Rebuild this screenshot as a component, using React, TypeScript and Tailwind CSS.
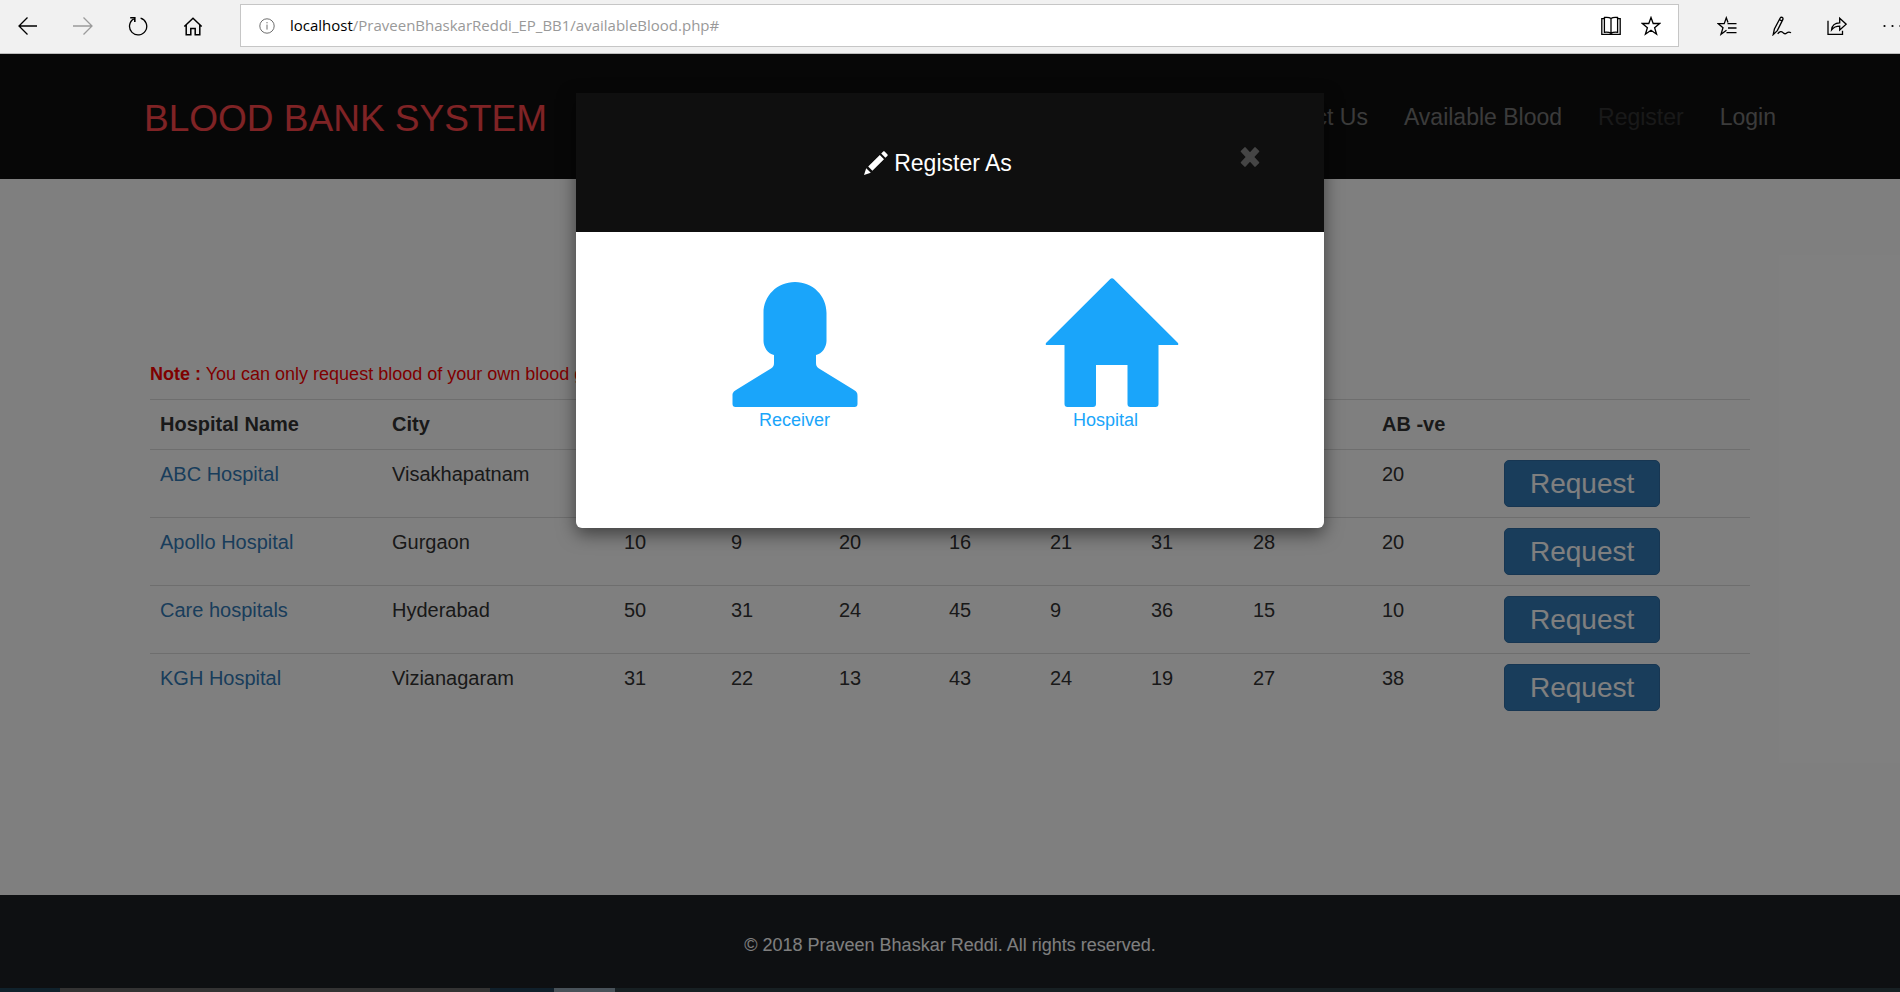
import { ReactNode } from "react";

type Hospital = { name: string; city: string; stock: (number | null)[] };

const groups = ["", "", "", "", "", "", "", "AB -ve"];

const hospitals: Hospital[] = [
  { name: "ABC Hospital", city: "Visakhapatnam", stock: [null, null, null, null, null, null, null, 20] },
  { name: "Apollo Hospital", city: "Gurgaon", stock: [10, 9, 20, 16, 21, 31, 28, 20] },
  { name: "Care hospitals", city: "Hyderabad", stock: [50, 31, 24, 45, 9, 36, 15, 10] },
  { name: "KGH Hospital", city: "Vizianagaram", stock: [31, 22, 13, 43, 24, 19, 27, 38] },
];

const columns = [
  "w-[232px]", "w-[232px]", "w-[107px]", "w-[108px]", "w-[110px]", "w-[101px]",
  "w-[101px]", "w-[102px]", "w-[129px]", "w-[122px]", "w-auto",
];

function Line({ children }: { children: ReactNode }) {
  return (
    <svg viewBox="0 0 20 20" fill="none" stroke="currentColor" strokeWidth="1.3" className="size-5" aria-hidden="true">
      {children}
    </svg>
  );
}

function BrowserBar() {
  return (
    <div className="flex h-[54px] shrink-0 items-center overflow-hidden border-b border-[#bdbdbd] bg-[#f1f1f1] pb-0.5 pl-[18px] text-black">
      <div className="flex w-[222px] shrink-0 items-center gap-[35px]">
        <button aria-label="Back">
          <Line>
            <path d="M19 10H1M9.500 1.500 1 10l8.500 8.500" />
          </Line>
        </button>
        <button aria-label="Forward" className="text-[#9b9b9b]">
          <Line>
            <path d="M0 10h19M10.500 1.500 19 10l-8.500 8.500" />
          </Line>
        </button>
        <button aria-label="Refresh">
          <Line>
            <path d="M12.600 2.100A8.600 8.600 0 1 1 5.800 2.900" />
            <path d="M2.200 1.700h4.600v4.300" strokeWidth="1.600" />
          </Line>
        </button>
        <button aria-label="Home">
          <Line>
            <path d="M1.300 10.500 10 2.200l8.700 8.300M3.200 9v9.800h4.600v-6.400h4.400v6.400h4.600V9" strokeWidth="1.500" />
          </Line>
        </button>
      </div>
      <div className="flex h-[43px] min-w-0 grow items-center border border-[#c6c6c6] bg-white pl-[18px] pr-[17px]">
        <svg viewBox="0 0 16 16" fill="none" stroke="#6e6e6e" className="size-4 shrink-0" aria-hidden="true">
          <circle cx="8" cy="8" r="7.200" />
          <path d="M8 6.600v5M8 4v1.300" />
        </svg>
        <p className="grow truncate pl-[15px] font-['Open_Sans',sans-serif] text-[15px] text-[#999]">
          <span className="text-black">localhost</span>/PraveenBhaskarReddi_EP_BB1/availableBlood.php#
        </p>
        <div className="flex gap-5">
          <button aria-label="Reading view">
            <Line>
              <path d="M10 2.600C8.500 1.300 5.600 1.200 3.400 1.500v14.800c2.500-.2 5.100-.1 6.600 1.200 1.500-1.300 4.100-1.400 6.600-1.200V1.500c-2.200-.3-5.100-.2-6.600 1.100zM10 2.600v15.600" />
              <path d="M3.400 2.700H.8v15.600h18.400V2.700h-2.600" />
            </Line>
          </button>
          <button aria-label="Add to favorites">
            <Line>
              <path d="m10 1.500 2.200 6h6.500l-5.100 4.200 2 6.500-5.600-3.900-5.600 3.900 2-6.500L1.300 7.500h6.500z" />
            </Line>
          </button>
        </div>
      </div>
      <div className="flex w-[221px] shrink-0 items-center gap-[35px] pl-[38px]">
        <button aria-label="Favorites">
          <Line>
            <path d="M11 6.500 9.300 1.800 7.200 7.600H1l5 4.200-2 6.400 5.500-4" />
            <path d="M10.500 7.600H19.500M11 12h8.500M9.500 16.700h10" />
          </Line>
        </button>
        <button aria-label="Web notes">
          <Line>
            <path d="M1.200 18.600 2.400 13 8.200 2c1-1.600 3.300-.4 2.700 1.400L5.300 14.600 1.200 18.600zM7.400 3.600l2.500 1.300M5.700 17.800c2-2.500 3.800-2.800 5-1.400s2.600 1.800 4 .6 2.600-1.300 4.300-.3" />
          </Line>
        </button>
        <button aria-label="Share">
          <Line>
            <path d="M1 4.800v13.600h14.500v-3.600" />
            <path d="M4.600 13.800c.5-4.500 3-7 8.100-7V2.300L19.200 8.200l-6.500 5.900v-4c-3.800 0-6 1-8.100 3.700z" />
          </Line>
        </button>
        <button aria-label="More">
          <svg viewBox="0 0 20 20" fill="currentColor" className="size-5" aria-hidden="true">
            <circle cx="2.500" cy="10" r="1.100" />
            <circle cx="10.500" cy="10" r="1.100" />
            <circle cx="18.500" cy="10" r="1.100" />
          </svg>
        </button>
      </div>
    </div>
  );
}

function Navbar() {
  return (
    <header className="flex h-[125px] shrink-0 items-center justify-between bg-[#0f0f0f] pl-36 pr-[124px]">
      <a href="#" className="pt-1 text-[37px] leading-[48px] text-[#ff464a]">BLOOD BANK SYSTEM</a>
      <nav className="flex gap-9 text-[23px] leading-8 text-[#777]">
        <a href="#">Contact Us</a>
        <a href="#">Available Blood</a>
        <a href="#" className="text-[#333]">Register</a>
        <a href="#">Login</a>
      </nav>
    </header>
  );
}

function StockTable() {
  return (
    <table className="w-full table-fixed text-left text-[20px] leading-[29px] text-[#333]">
      <colgroup>
        {columns.map((width, i) => <col key={i} className={width} />)}
      </colgroup>
      <thead>
        <tr className="border-t border-[#ddd]">
          <th className="p-2.5">Hospital Name</th>
          <th className="p-2.5">City</th>
          {groups.map((g, i) => <th key={i} className="p-2.5">{g}</th>)}
          <td />
        </tr>
      </thead>
      <tbody>
        {hospitals.map((h) => (
          <tr key={h.name} className="border-t border-[#ddd] align-top">
            <td className="p-2.5"><a href="#" className="text-[#337ab7]">{h.name}</a></td>
            <td className="p-2.5">{h.city}</td>
            {h.stock.map((n, i) => <td key={i} className="p-2.5">{n}</td>)}
            <td className="p-2.5">
              <button className="block rounded-[5px] border border-[#2e6da4] bg-[#337ab7] px-[25px] text-[28px] leading-[45px] text-white">
                Request
              </button>
            </td>
          </tr>
        ))}
      </tbody>
    </table>
  );
}

function RegisterDialog() {
  return (
    <div role="dialog" aria-label="Register As" className="w-[748px] overflow-hidden rounded-b-[6px] bg-white shadow-[0_6px_18px_rgba(0,0,0,0.5)]">
      <div className="flex h-[139px] items-center bg-[#0f0f0f] pr-16 pl-[60px]">
        <h4 className="flex grow items-center justify-center gap-1.5 text-[23px] leading-8 text-white">
          <svg viewBox="0 0 24 24" fill="currentColor" className="size-6" aria-hidden="true">
            <path d="M0 24 2.200 17.200 6.800 21.800zM4.200 15.600 15.800 4 20 8.200 8.400 19.800zM17.200 2.600 19 .7c.6-.6 1.200-.6 1.800 0l2.500 2.500c.6.6.6 1.200 0 1.800L21.400 6.800z" />
          </svg>
          Register As
        </h4>
        <button aria-label="Close" className="mb-3 text-[#454545]">
          <svg viewBox="0 0 20 20" fill="currentColor" className="size-5" aria-hidden="true">
            <path d="M4.300.4q.7-.6 1.400 0L10 5.200 14.300.4q.7-.6 1.400 0L19 3.700q.6.700 0 1.400L14.400 10l4.600 4.900q.6.700 0 1.400l-3.300 3.300q-.7.600-1.400 0L10 14.800l-4.300 4.800q-.7.600-1.400 0L1 16.300q-.6-.7 0-1.400L5.600 10 1 5.100q-.6-.7 0-1.400z" />
          </svg>
        </button>
      </div>
      <div className="flex h-[296px] justify-center gap-[185px] pt-[45px] pl-2 text-[18px] leading-[25px] text-[#1aa5fa]">
        <a href="#" className="flex w-[130px] flex-col items-center">
          <svg viewBox="0 0 126 131" fill="currentColor" className="h-[131px] w-[126px]" aria-hidden="true">
            <path d="M63 5C81 5 94.500 19 94.500 36V64C94.500 70 90 77 84 78V86C84 89 85 90 87 91.500L122 113C125 115 125.500 116 125.500 119V127Q125.500 130 122.500 130H3.500Q.5 130 .5 127V119C.5 116 1 115 4 113L39 91.500C41 90 42 89 42 86V78C36 77 31.500 70 31.500 64V36C31.500 19 45 5 63 5Z" />
          </svg>
          Receiver
        </a>
        <a href="#" className="flex w-[134px] flex-col items-center">
          <svg viewBox="0 0 134 131" fill="currentColor" className="h-[131px] w-[134px]" aria-hidden="true">
            <path d="M65 2.200q2-1.800 4 0L133 66q1 2-1 2h-18.500v59q0 3-3 3h-25q-3 0-3-3V88H51v39q0 3-3 3H22.500q-3 0-3-3V68H2q-2 0-1-2z" />
          </svg>
          <span className="pr-3">Hospital</span>
        </a>
      </div>
    </div>
  );
}

export default function App() {
  return (
    <div className="flex min-h-screen flex-col bg-white font-['Liberation_Sans',Arial,sans-serif]">
      <BrowserBar />
      <div className="relative flex grow flex-col">
        <Navbar />
        <main className="grow px-[150px] pt-[180px] pb-20">
          <p className="pb-[10px] text-[18px] leading-[30px] text-[#f00]">
            <b>Note :</b> You can only request blood of your own blood group.
          </p>
          <StockTable />
        </main>
        <footer className="flex h-[93px] shrink-0 items-center justify-center bg-[#1d2024] pt-2 text-[18px] text-white">
          © 2018 Praveen Bhaskar Reddi. All rights reserved.
        </footer>
        <div className="absolute inset-0 flex items-start justify-center bg-black/50 pt-[39px]">
          <RegisterDialog />
        </div>
      </div>
      <div className="flex h-1 shrink-0 bg-[#172023]">
        <div className="w-[60px] bg-[#10222c]" />
        <div className="w-[430px] bg-[#333]" />
        <div className="w-16 bg-[#10202b]" />
        <div className="w-[61px] bg-[#485259]" />
      </div>
    </div>
  );
}
